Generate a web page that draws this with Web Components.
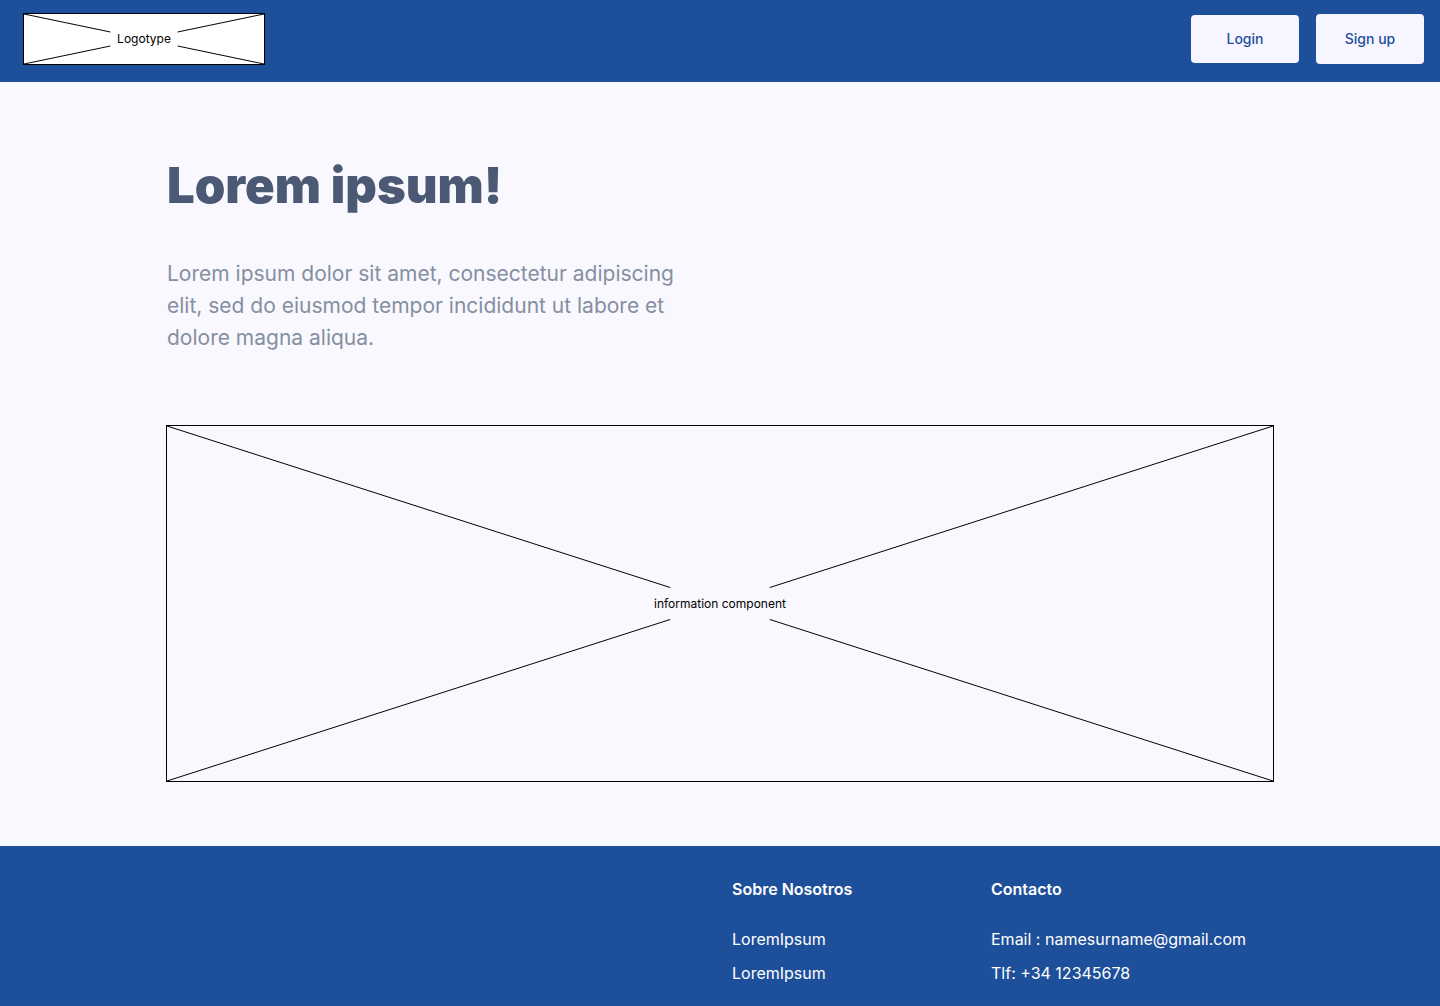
<!DOCTYPE html>
<html lang="es">
<head>
<meta charset="utf-8">
<meta name="viewport" content="width=device-width, initial-scale=1">
<title>Lorem ipsum</title>
<style>
  body { margin: 0; background: #f9f8fe; font-family: Inter, "Liberation Sans", sans-serif; color: #000; }
</style>
</head>
<body>
<landing-page></landing-page>

<script>
const define = (name, html, setup) => {
  const template = document.createElement('template');
  template.innerHTML = html;
  customElements.define(name, class extends HTMLElement {
    constructor() {
      super();
      this.attachShadow({ mode: 'open' }).append(template.content.cloneNode(true));
    }
    connectedCallback() { if (setup) setup(this); }
  });
};

// Framed box with four diagonals; "reach" is how far each one runs from its corner.
define('wire-box', `
  <style>
    :host { display: grid; box-sizing: border-box; border: 1px solid #000; }
    svg, span { grid-area: 1 / 1; }
    svg { display: block; width: 100%; height: 100%; min-height: 0; stroke: #000; stroke-width: 1; }
    span { place-self: center; font-size: 12px; line-height: 16px; }
  </style>
  <svg aria-hidden="true"><line/><line/><line/><line/></svg>
  <span><slot></slot></span>`,
  host => {
    const near = parseFloat(host.getAttribute('reach')), far = 100 - near;
    const ends = [[0, 0, near, near], [100, 0, far, near], [0, 100, near, far], [100, 100, far, far]];
    host.shadowRoot.querySelectorAll('line').forEach((line, i) => {
      ['x1', 'y1', 'x2', 'y2'].forEach((k, j) => line.setAttribute(k, ends[i][j] + '%'));
    });
  });

define('action-button', `
  <style>
    :host { display: block; }
    button { display: block; width: 108px; height: 48px; padding: 0; border: 0; border-radius: 4px;
      background: #f7f5ff; color: #1e4f9a; font: 500 14px/20px Inter, "Liberation Sans", sans-serif; cursor: pointer; }
    :host([large]) button { height: 50px; }
  </style>
  <button type="button"><slot></slot></button>`);

define('site-header', `
  <style>
    :host { display: block; background: #1e4f9a; }
    header { display: flex; align-items: center; justify-content: space-between; padding: 13px 16px 17px 23px; }
    wire-box { width: 242px; height: 52px; background: #fff; }
    nav { display: flex; align-items: center; gap: 17px; }
  </style>
  <header>
    <wire-box reach="36">Logotype</wire-box>
    <nav><action-button>Login</action-button><action-button large>Sign up</action-button></nav>
  </header>`);

define('hero-intro', `
  <style>
    :host { display: block; padding-left: 1px; }
    h1 { margin: 0 0 40px; font-size: 49px; line-height: 64px; font-weight: 900; color: #4b5975; }
    p { margin: 0; max-width: 520px; font-size: 21px; line-height: 32px; color: #858fa1; }
  </style>
  <h1><slot name="title"></slot></h1>
  <p><slot></slot></p>`);

define('footer-column', `
  <style>
    :host { display: block; font-size: 16px; line-height: 24px; color: #fff; }
    h2 { margin: 0 0 26px; font-size: 16px; line-height: 24px; font-weight: 600; }
    div { display: flex; flex-direction: column; align-items: flex-start; gap: 10px; }
    ::slotted(a) { color: inherit; text-decoration: none; white-space: nowrap; }
  </style>
  <h2><slot name="title"></slot></h2>
  <div><slot></slot></div>`);

define('site-footer', `
  <style>
    :host { display: block; background: #1e4f9a; }
    footer { display: grid; grid-template-columns: 566fr 259fr 283fr; max-width: 1108px;
      margin: 0 auto; padding: 31px 0 21px; }
    footer-column:first-child { grid-column: 2; }
  </style>
  <footer>
    <footer-column>
      <span slot="title">Sobre Nosotros</span>
      <a href="#">LoremIpsum</a>
      <a href="#">LoremIpsum</a>
    </footer-column>
    <footer-column>
      <span slot="title">Contacto</span>
      <a href="mailto:namesurname@gmail.com">Email : namesurname@gmail.com</a>
      <a href="tel:+3412345678">Tlf: +34 12345678</a>
    </footer-column>
  </footer>`);

define('landing-page', `
  <style>
    :host { display: flex; flex-direction: column; min-height: 100vh; }
    main { flex: 1; box-sizing: border-box; width: 100%; max-width: 1108px; margin: 0 auto; padding: 72px 0 64px; }
    wire-box { height: 357px; margin-top: 71px; }
  </style>
  <site-header></site-header>
  <main>
    <hero-intro>
      <span slot="title">Lorem ipsum!</span>
      Lorem ipsum dolor sit amet, consectetur adipiscing elit, sed do eiusmod tempor incididunt ut labore et dolore magna aliqua.
    </hero-intro>
    <wire-box reach="45.5">information component</wire-box>
  </main>
  <site-footer></site-footer>`);
</script>
</body>
</html>
